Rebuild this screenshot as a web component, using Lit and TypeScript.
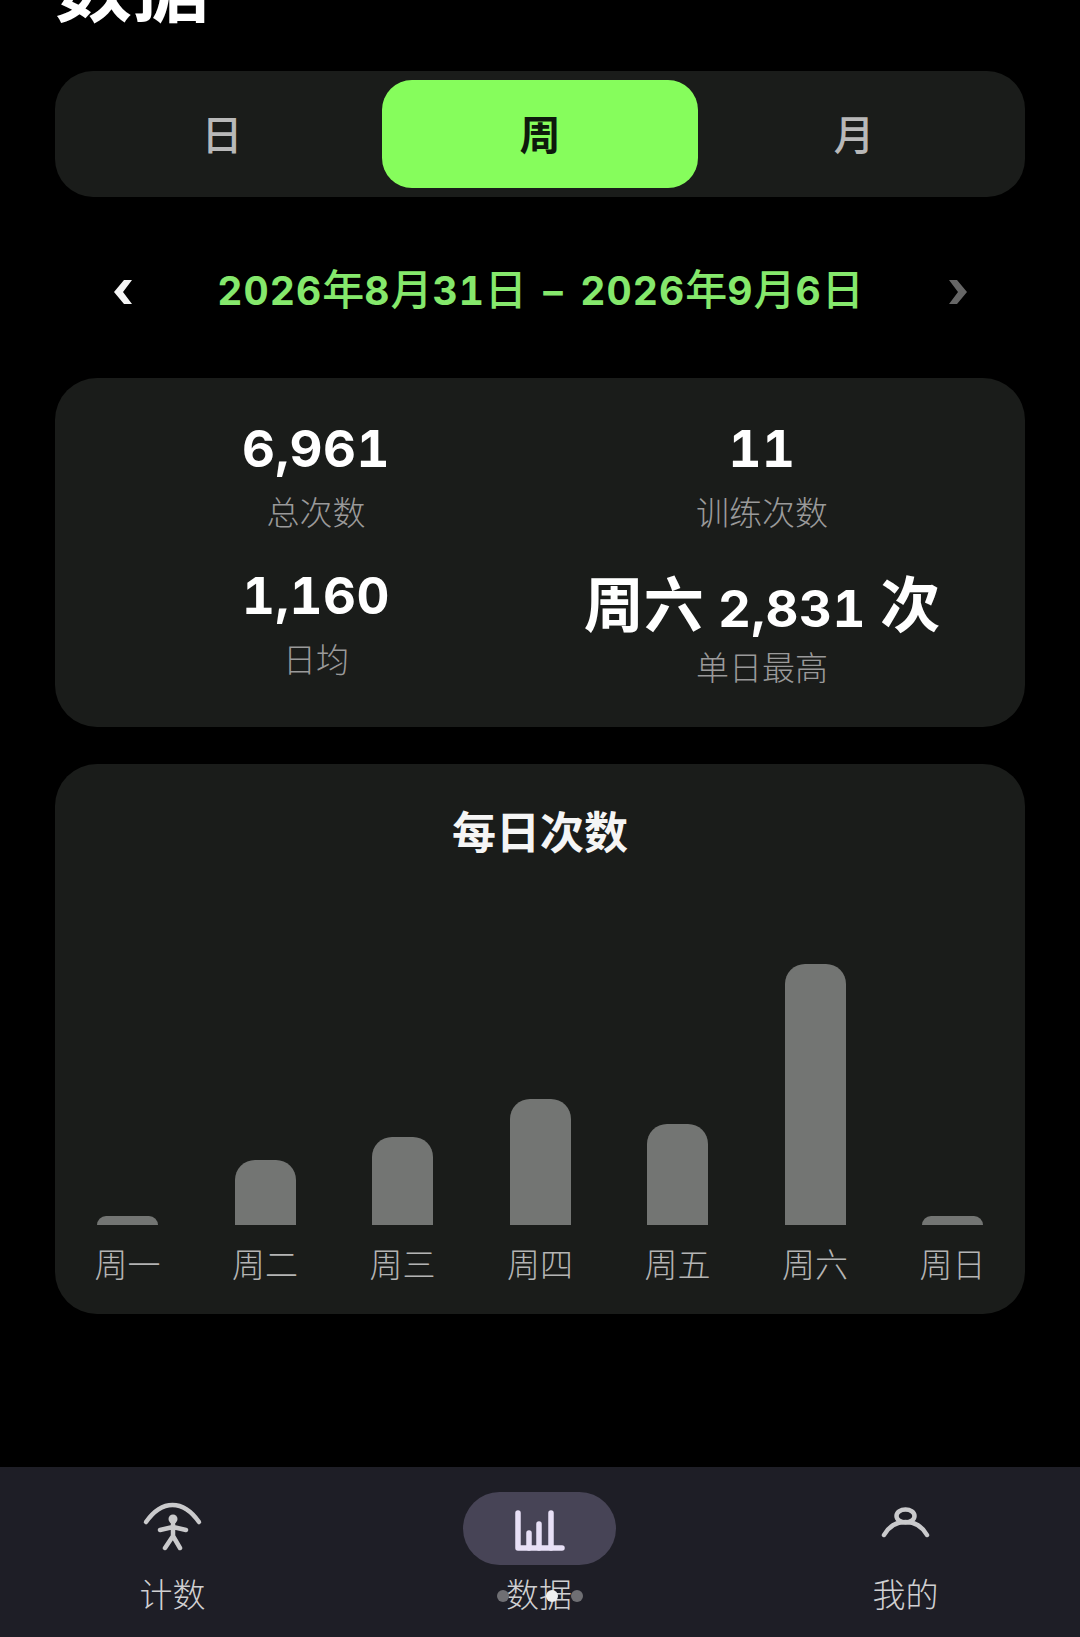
import { LitElement, html, css, svg } from "lit";
import { customElement } from "lit/decorators.js";

const BARS = [
  { label: "周一", h: 9 },
  { label: "周二", h: 65 },
  { label: "周三", h: 88 },
  { label: "周四", h: 126 },
  { label: "周五", h: 101 },
  { label: "周六", h: 261 },
  { label: "周日", h: 9 },
];

const iconCount = svg`<svg class="ico" width="153" height="73" viewBox="0 0 153 73" fill="none" stroke="currentColor" stroke-width="4.5" stroke-linecap="round" stroke-linejoin="round">
  <path d="M50 30 Q62 13 76.5 13 Q91 13 103 30"/>
  <circle cx="77" cy="27" r="4.5" fill="currentColor" stroke="none"/>
  <path d="M64 38 L77 35 L90 38 M77 30 L77 44 L69 56 M77 44 L84 56"/>
</svg>`;

const iconData = svg`<svg class="ico" width="153" height="73" viewBox="0 0 153 73" fill="none" stroke="currentColor" stroke-width="5.5" stroke-linecap="round" stroke-linejoin="round">
  <path d="M55 21 V56 H99"/>
  <path d="M66 41 V56 M76 32 V56 M88 21 V56"/>
</svg>`;

const iconMine = svg`<svg class="ico" width="153" height="73" viewBox="0 0 153 73" fill="none" stroke="currentColor" stroke-width="4.5" stroke-linecap="round" stroke-linejoin="round">
  <ellipse cx="76.5" cy="24" rx="9" ry="6.5"/>
  <path d="M55 43 C60 34 68 30 76.5 30 C85 30 93 34 98 43"/>
</svg>`;

@customElement("app-root")
export class AppRoot extends LitElement {
  static styles = css`
    :host {
      display: block;
      width: 1080px;
      height: 1637px;
      background: #000;
      overflow: hidden;
      font-family: "Noto Sans CJK SC", "Noto Sans", sans-serif;
    }
    .page {
      height: 1637px;
      display: flex;
      flex-direction: column;
    }
    .main {
      padding: 0 55px;
      display: flex;
      flex-direction: column;
    }
    .title {
      margin: -55px 0 0 0;
      height: 76px;
      font-size: 77px;
      line-height: 76px;
      font-weight: 700;
      color: #fff;
    }
    .tabs {
      margin-top: 50px;
      height: 126px;
      box-sizing: border-box;
      padding: 9px;
      background: #1a1c1a;
      border-radius: 38px;
      display: grid;
      grid-template-columns: repeat(3, 1fr);
      gap: 2px;
    }
    .tab {
      display: flex;
      align-items: center;
      justify-content: center;
      padding-bottom: 4px;
      font-size: 41px;
      font-weight: 500;
      color: #b8b8b8;
      border-radius: 30px;
    }
    .tab.right {
      padding-right: 8px;
    }
    .tab.on {
      background: #86fd5c;
      color: #0e1a0c;
      font-weight: 700;
    }
    .date {
      margin-top: 62px;
      height: 60px;
      padding: 0 57px 0 58px;
      display: flex;
      align-items: center;
      justify-content: space-between;
    }
    .date-text {
      font-family: Inter, "Noto Sans CJK SC", sans-serif;
      font-feature-settings: "tnum";
      font-size: 39px;
      font-weight: 700;
      letter-spacing: 1px;
      word-spacing: 5px;
      line-height: 60px;
      color: #85e86c;
      white-space: nowrap;
    }
    .date-text .z {
      font-family: "Noto Sans CJK SC", sans-serif;
      font-size: 42px;
      font-weight: 500;
      letter-spacing: 0;
    }
    .chev {
      display: block;
      margin-top: 6px;
      color: #f5f5f5;
    }
    .chev.off {
      color: #666;
    }
    .stats {
      margin-top: 59px;
      height: 349px;
      box-sizing: border-box;
      padding: 39px 40px 0 38px;
      background: #1a1c1a;
      border-radius: 42px;
      display: grid;
      grid-template-columns: 1fr 1fr;
      grid-auto-rows: 114px;
      row-gap: 33px;
    }
    .stat {
      text-align: center;
    }
    .val {
      font-family: Inter, "Noto Sans CJK SC", sans-serif;
      font-feature-settings: "tnum";
      font-size: 51px;
      line-height: 64px;
      font-weight: 700;
      letter-spacing: 0.5px;
      color: #fff;
      white-space: nowrap;
    }
    .val .z {
      font-family: "Noto Sans CJK SC", sans-serif;
      font-size: 60px;
      font-weight: 700;
      letter-spacing: 0;
    }
    .val.low {
      padding-top: 5px;
    }
    .lab {
      margin-top: 10px;
      font-size: 33px;
      line-height: 40px;
      font-weight: 300;
      color: #9a9a9a;
    }
    .val.low + .lab {
      margin-top: 5px;
    }
    .chart {
      margin-top: 37px;
      height: 550px;
      box-sizing: border-box;
      padding: 38px 40px 0;
      background: #1a1c1a;
      border-radius: 42px;
      display: flex;
      flex-direction: column;
    }
    .chart-title {
      text-align: center;
      font-size: 44px;
      line-height: 56px;
      font-weight: 700;
      color: #f5f5f5;
    }
    .plot {
      flex: 1;
      margin-bottom: 31px;
      display: flex;
      justify-content: space-between;
      align-items: flex-end;
    }
    .col {
      width: 65px;
      display: flex;
      flex-direction: column;
      align-items: center;
    }
    .bar {
      width: 61px;
      background: #737573;
      border-radius: 20px 20px 0 0;
    }
    .col-lab {
      margin-top: 18px;
      font-size: 33px;
      line-height: 40px;
      font-weight: 300;
      color: #b4b4b4;
      white-space: nowrap;
    }
    .nav {
      margin-top: auto;
      height: 170px;
      box-sizing: border-box;
      padding: 25px 98px 0 96px;
      background: #1e1e26;
      display: flex;
      justify-content: space-between;
      position: relative;
    }
    .item {
      width: 153px;
      display: flex;
      flex-direction: column;
      align-items: center;
      color: #cacacc;
    }
    .pill {
      width: 153px;
      height: 73px;
      border-radius: 37px;
    }
    .pill.on {
      background: #474456;
      color: #e8e0f6;
    }
    .ico {
      display: block;
    }
    .nav-lab {
      margin-top: 6px;
      font-size: 33px;
      line-height: 44px;
      font-weight: 300;
      color: #d0d0d2;
    }
    .dot {
      position: absolute;
      top: 123px;
      width: 12px;
      height: 12px;
      border-radius: 50%;
      background: #6f6f73;
    }
    .dot.a { left: 497px; }
    .dot.b { left: 571px; }
    .dot.c { left: 546px; background: #f0f0f0; }
  `;

  private chev(dir: "l" | "r") {
    const d = dir === "l" ? "M19 2 L10 14 L19 26 H11 L1 14 L11 2 Z" : "M1 2 L10 14 L1 26 H9 L19 14 L9 2 Z";
    return html`<svg class="chev ${dir === "r" ? "off" : ""}" width="20" height="28" viewBox="0 0 20 28" fill="currentColor"><path d=${d}></path></svg>`;
  }

  render() {
    return html`
      <div class="page">
        <div class="main">
          <div class="title">数据</div>
          <div class="tabs">
            <div class="tab">日</div>
            <div class="tab on">周</div>
            <div class="tab right">月</div>
          </div>
          <div class="date">
            ${this.chev("l")}
            <div class="date-text">2026<span class="z">年</span>8<span class="z">月</span>31<span class="z">日</span> – 2026<span class="z">年</span>9<span class="z">月</span>6<span class="z">日</span></div>
            ${this.chev("r")}
          </div>
          <div class="stats">
            <div class="stat"><div class="val">6,961</div><div class="lab">总次数</div></div>
            <div class="stat"><div class="val">11</div><div class="lab">训练次数</div></div>
            <div class="stat"><div class="val">1,160</div><div class="lab">日均</div></div>
            <div class="stat"><div class="val low"><span class="z">周六</span> 2,831 <span class="z">次</span></div><div class="lab">单日最高</div></div>
          </div>
          <div class="chart">
            <div class="chart-title">每日次数</div>
            <div class="plot">
              ${BARS.map(
                (b) => html`<div class="col">
                  <div class="bar" style="height:${b.h}px"></div>
                  <div class="col-lab">${b.label}</div>
                </div>`
              )}
            </div>
          </div>
        </div>
        <div class="nav">
          <div class="item"><div class="pill">${iconCount}</div><div class="nav-lab">计数</div></div>
          <div class="item"><div class="pill on">${iconData}</div><div class="nav-lab">数据</div></div>
          <div class="item"><div class="pill">${iconMine}</div><div class="nav-lab">我的</div></div>
          <span class="dot a"></span><span class="dot b"></span><span class="dot c"></span>
        </div>
      </div>
    `;
  }
}
